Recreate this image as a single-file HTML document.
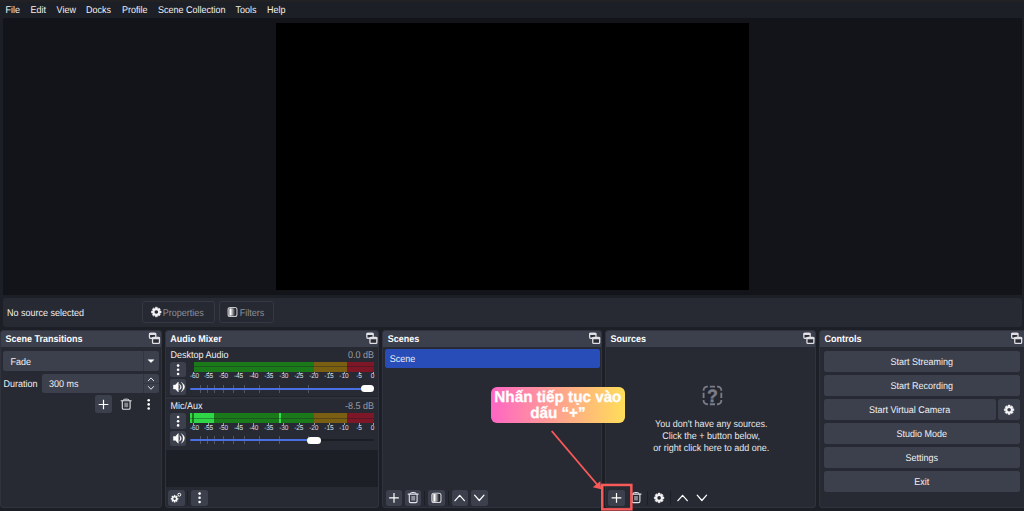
<!DOCTYPE html>
<html lang="vi"><head><meta charset="utf-8"><title>OBS</title>
<style>
*{box-sizing:border-box;margin:0;padding:0}
html,body{width:1024px;height:511px;overflow:hidden;background:#1d1f26;font-family:"Liberation Sans",sans-serif;font-size:9px;color:#fff;text-rendering:geometricPrecision}
.abs{position:absolute}
svg{overflow:visible}
#topline{left:0;top:0;width:1024px;height:1.5px;background:#222224}
#menubar{left:0;top:1.5px;width:1024px;height:16.5px;background:#1d1f26}
#menubar span{position:absolute;top:3.7px;line-height:10px;white-space:nowrap;color:#f0f0f3;transform:scaleY(1.09)}
#preview{left:2.7px;top:17.7px;width:1019px;height:277.3px;background:#13141a}
#canvas{left:276px;top:23.3px;width:473px;height:266.3px;background:#000}
#ctxbar{left:3px;top:297.5px;width:1018.7px;height:29.3px;background:#272a33;border-radius:3px}
.dock{position:absolute;top:329.7px;height:178.7px;background:#272a33;border-radius:3px;overflow:hidden;border:1px solid #30333e}
.dock .title{position:absolute;left:-1px;top:-1px;right:-1px;height:17.3px;background:#3c404d}
.dock .title b{position:absolute;left:5.5px;top:4.3px;line-height:10px;font-weight:bold;white-space:nowrap;color:#fdfdfe;transform:scaleY(1.09)}
.btn{position:absolute;background:#3c404d;border-radius:2.5px}
.lbl{position:absolute;white-space:nowrap;line-height:10px;color:#f0f0f3;transform:scaleY(1.09);margin-top:1.2px}
.lbl.c{transform:translateX(-50%) scaleY(1.09)}
.obtn{position:absolute;border:1.2px solid #363944;border-radius:3px;background:#262931}
.sep{position:absolute;width:1px;background:#1d1f26}
.tk{position:absolute;font-size:6.5px;line-height:7px;color:#dcdde2;transform:translateX(-50%) scaleY(1.1);white-space:nowrap;letter-spacing:-0.1px}
</style></head><body>
<div id="topline" class="abs"></div>
<div id="menubar" class="abs">
<span style="left:5.6px">File</span><span style="left:30.5px">Edit</span><span style="left:56.6px">View</span><span style="left:86px">Docks</span><span style="left:122px">Profile</span><span style="left:158px">Scene Collection</span><span style="left:235.5px">Tools</span><span style="left:267px">Help</span>
</div>
<div id="preview" class="abs"></div>
<div id="canvas" class="abs"></div>
<div id="ctxbar" class="abs"></div>

<span class="lbl" style="left:7px;top:307px;">No source selected</span>
<div class="obtn" style="left:142px;top:301px;width:73px;height:22px"></div>
<svg class="abs" style="left:150px;top:306px" width="13" height="13" viewBox="-6.300 -6.000 13 13" ><path d="M-1.07,-3.67 L-0.99,-4.80 L0.99,-4.80 L1.07,-3.67 L1.84,-3.35 L2.69,-4.10 L4.10,-2.69 L3.35,-1.84 L3.67,-1.07 L4.80,-0.99 L4.80,0.99 L3.67,1.07 L3.35,1.84 L4.10,2.69 L2.69,4.10 L1.84,3.35 L1.07,3.67 L0.99,4.80 L-0.99,4.80 L-1.07,3.67 L-1.84,3.35 L-2.69,4.10 L-4.10,2.69 L-3.35,1.84 L-3.67,1.07 L-4.80,0.99 L-4.80,-0.99 L-3.67,-1.07 L-3.35,-1.84 L-4.10,-2.69 L-2.69,-4.10 L-1.84,-3.35Z" fill="#f4f4f6" stroke="#f4f4f6" stroke-width="0.5" stroke-linejoin="round"/><circle cx="0" cy="0" r="1.81" fill="#262931"/></svg>
<span class="lbl" style="left:162.8px;top:306.6px;color:#8c8f99">Properties</span>
<div class="obtn" style="left:218.8px;top:301px;width:55.2px;height:22px"></div>
<svg class="abs" style="left:226px;top:305px" width="14" height="14" viewBox="-6.500 -7.000 14 14" ><linearGradient id="fg1" x1="0" y1="0" x2="1" y2="0"><stop offset="0" stop-color="#ffffff" stop-opacity="0.45"/><stop offset="0.3" stop-color="#ffffff" stop-opacity="1"/><stop offset="0.45" stop-color="#ffffff" stop-opacity="0.75"/><stop offset="1" stop-color="#ffffff" stop-opacity="0"/></linearGradient><rect x="-4.45" y="-4.45" width="8.9" height="8.9" rx="2" fill="#23252d" stroke="#c4c5cb" stroke-width="1.1"/><rect x="-3.9" y="-3.7" width="6.6" height="7.4" fill="url(#fg1)"/></svg>
<span class="lbl" style="left:239.7px;top:306.6px;color:#8c8f99">Filters</span>
<div class="dock" id="d1" style="left:0px;width:162px"><div class="title"><b>Scene Transitions</b></div></div>
<div class="dock" id="d2" style="left:164.8px;width:214.4px"><div class="title"><b>Audio Mixer</b></div></div>
<div class="dock" id="d3" style="left:382.3px;width:219.8px"><div class="title"><b>Scenes</b></div></div>
<div class="dock" id="d4" style="left:604.9px;width:211.3px"><div class="title"><b>Sources</b></div></div>
<div class="dock" id="d5" style="left:819px;width:210px"><div class="title"><b>Controls</b></div></div>
<svg class="abs" style="left:148px;top:332px" width="13" height="13" viewBox="-0.800 -0.700 13 13" ><rect x="0.65" y="0.65" width="6.3" height="4.9" rx="0.9" fill="#2a2c36" stroke="#e0e0e5" stroke-width="1.3"/><rect x="0.2" y="0.1" width="7.2" height="2.2" rx="0.8" fill="#e0e0e5"/><rect x="3.75" y="4.75" width="6.9" height="5.9" rx="0.9" fill="#2a2c36" stroke="#e0e0e5" stroke-width="1.3"/><rect x="3.2" y="4.2" width="8" height="2.4" rx="0.8" fill="#e0e0e5"/></svg>
<svg class="abs" style="left:366px;top:332px" width="13" height="13" viewBox="-0.200 -0.700 13 13" ><rect x="0.65" y="0.65" width="6.3" height="4.9" rx="0.9" fill="#2a2c36" stroke="#e0e0e5" stroke-width="1.3"/><rect x="0.2" y="0.1" width="7.2" height="2.2" rx="0.8" fill="#e0e0e5"/><rect x="3.75" y="4.75" width="6.9" height="5.9" rx="0.9" fill="#2a2c36" stroke="#e0e0e5" stroke-width="1.3"/><rect x="3.2" y="4.2" width="8" height="2.4" rx="0.8" fill="#e0e0e5"/></svg>
<svg class="abs" style="left:589px;top:332px" width="13" height="13" viewBox="0.000 -0.700 13 13" ><rect x="0.65" y="0.65" width="6.3" height="4.9" rx="0.9" fill="#2a2c36" stroke="#e0e0e5" stroke-width="1.3"/><rect x="0.2" y="0.1" width="7.2" height="2.2" rx="0.8" fill="#e0e0e5"/><rect x="3.75" y="4.75" width="6.9" height="5.9" rx="0.9" fill="#2a2c36" stroke="#e0e0e5" stroke-width="1.3"/><rect x="3.2" y="4.2" width="8" height="2.4" rx="0.8" fill="#e0e0e5"/></svg>
<svg class="abs" style="left:803px;top:332px" width="13" height="13" viewBox="-0.200 -0.700 13 13" ><rect x="0.65" y="0.65" width="6.3" height="4.9" rx="0.9" fill="#2a2c36" stroke="#e0e0e5" stroke-width="1.3"/><rect x="0.2" y="0.1" width="7.2" height="2.2" rx="0.8" fill="#e0e0e5"/><rect x="3.75" y="4.75" width="6.9" height="5.9" rx="0.9" fill="#2a2c36" stroke="#e0e0e5" stroke-width="1.3"/><rect x="3.2" y="4.2" width="8" height="2.4" rx="0.8" fill="#e0e0e5"/></svg>
<svg class="abs" style="left:1011px;top:332px" width="13" height="13" viewBox="0.000 -0.700 13 13" ><rect x="0.65" y="0.65" width="6.3" height="4.9" rx="0.9" fill="#2a2c36" stroke="#e0e0e5" stroke-width="1.3"/><rect x="0.2" y="0.1" width="7.2" height="2.2" rx="0.8" fill="#e0e0e5"/><rect x="3.75" y="4.75" width="6.9" height="5.9" rx="0.9" fill="#2a2c36" stroke="#e0e0e5" stroke-width="1.3"/><rect x="3.2" y="4.2" width="8" height="2.4" rx="0.8" fill="#e0e0e5"/></svg>
<div class="btn" style="left:3.2px;top:351px;width:155.5px;height:19.8px;"></div>
<div class="sep" style="left:142.6px;top:351px;height:19.8px;background:#323540"></div>
<span class="lbl" style="left:10.6px;top:356px;">Fade</span>
<svg class="abs" style="left:147px;top:359px" width="8" height="5" viewBox="-0.800 -0.400 8 5" ><path d="M0.3,0.3H6.1L3.2,3.2Z" fill="#fff" stroke="#fff" stroke-width="0.5" stroke-linejoin="round"/></svg>
<span class="lbl" style="left:3.5px;top:377.9px;">Duration</span>
<div class="btn" style="left:42.2px;top:374px;width:116.5px;height:19.3px;"></div>
<div class="sep" style="left:142.6px;top:374px;height:19.3px;background:#323540"></div>
<div class="abs" style="left:143px;top:383.3px;width:15.7px;height:1px;background:#323540"></div>
<span class="lbl" style="left:49.1px;top:377.9px;">300 ms</span>
<svg class="abs" style="left:144px;top:372px" width="15" height="15" viewBox="-7.000 -7.300 15 15" ><path d="M-2.6,1.4L0,-1.4L2.6,1.4" stroke="#e8e9ec" stroke-width="1.0" fill="none" stroke-linecap="round" stroke-linejoin="round"/></svg>
<svg class="abs" style="left:144px;top:380px" width="15" height="15" viewBox="-7.000 -7.900 15 15" ><path d="M-2.6,-1.4L0,1.4L2.6,-1.4" stroke="#e8e9ec" stroke-width="1.0" fill="none" stroke-linecap="round" stroke-linejoin="round"/></svg>
<div class="btn" style="left:94.7px;top:395.2px;width:17.3px;height:18.3px;"></div>
<svg class="abs" style="left:97px;top:398px" width="13" height="13" viewBox="-6.500 -6.500 13 13" ><path d="M-4.85,0H4.85M0,-4.85V4.85" stroke="#ffffff" stroke-width="1.2" stroke-linecap="butt" fill="none"/></svg>
<svg class="abs" style="left:119px;top:397px" width="14" height="14" viewBox="-7.200 -7.400 14 14" ><path d="M-5,-3.6H5" stroke="#e4e5e9" stroke-width="1.1" stroke-linecap="round" fill="none"/><path d="M-2.9,-3.8Q-2.9,-5.2 -1.5,-5.2H1.5Q2.9,-5.2 2.9,-3.8" stroke="#e4e5e9" stroke-width="1" fill="none"/><path d="M-3.9,-3.4V3.6Q-3.9,4.9 -2.6,4.9H2.6Q3.9,4.9 3.9,3.6V-3.4" stroke="#e4e5e9" stroke-width="1.1" fill="none"/><rect x="-1.9" y="-1.7" width="3.8" height="4.5" fill="#e4e5e9" opacity="0.5"/></svg>
<svg class="abs" style="left:141px;top:397px" width="15" height="15" viewBox="-7.700 -7.400 15 15" ><circle cx="0" cy="-4.1" r="1.3" fill="#ffffff"/><circle cx="0" cy="0" r="1.3" fill="#ffffff"/><circle cx="0" cy="4.1" r="1.3" fill="#ffffff"/></svg>
<div class="abs" style="left:166.2px;top:449.7px;width:211.6px;height:37px;background:#1d1f26"></div>
<span class="lbl" style="left:170.4px;top:348.7px;">Desktop Audio</span><span class="lbl" style="right:650px;top:348.7px;color:#9a9da6">0.0 dB</span><div class="btn" style="left:170.2px;top:361.7px;width:15.8px;height:15.6px;"></div><svg class="abs" style="left:171px;top:362px" width="15" height="15" viewBox="-7.100 -7.800 15 15" ><circle cx="0" cy="-4.2" r="1.3" fill="#ffffff"/><circle cx="0" cy="0" r="1.3" fill="#ffffff"/><circle cx="0" cy="4.2" r="1.3" fill="#ffffff"/></svg><div class="abs" style="left:193.7px;top:361.7px;width:120.3px;height:10.2px;background:#1a7a1a"></div><div class="abs" style="left:314.0px;top:361.7px;width:33.1px;height:10.2px;background:#7a5f12"></div><div class="abs" style="left:347.1px;top:361.7px;width:27.1px;height:10.2px;background:#7d1626"></div><div class="abs" style="left:193.7px;top:366.09999999999997px;width:180.5px;height:1px;background:rgba(25,28,36,0.38)"></div><div class="abs" style="left:193.2px;top:371.9px;width:0.9px;height:2px;background:#9a9da6"></div><span class="tk" style="left:194.6px;top:373.09999999999997px">-60</span><div class="abs" style="left:208.2px;top:371.9px;width:0.9px;height:2px;background:#9a9da6"></div><span class="tk" style="left:208.5px;top:373.09999999999997px">-55</span><div class="abs" style="left:223.3px;top:371.9px;width:0.9px;height:2px;background:#9a9da6"></div><span class="tk" style="left:223.6px;top:373.09999999999997px">-50</span><div class="abs" style="left:238.3px;top:371.9px;width:0.9px;height:2px;background:#9a9da6"></div><span class="tk" style="left:238.6px;top:373.09999999999997px">-45</span><div class="abs" style="left:253.4px;top:371.9px;width:0.9px;height:2px;background:#9a9da6"></div><span class="tk" style="left:253.7px;top:373.09999999999997px">-40</span><div class="abs" style="left:268.4px;top:371.9px;width:0.9px;height:2px;background:#9a9da6"></div><span class="tk" style="left:268.7px;top:373.09999999999997px">-35</span><div class="abs" style="left:283.4px;top:371.9px;width:0.9px;height:2px;background:#9a9da6"></div><span class="tk" style="left:283.8px;top:373.09999999999997px">-30</span><div class="abs" style="left:298.5px;top:371.9px;width:0.9px;height:2px;background:#9a9da6"></div><span class="tk" style="left:298.8px;top:373.09999999999997px">-25</span><div class="abs" style="left:313.5px;top:371.9px;width:0.9px;height:2px;background:#9a9da6"></div><span class="tk" style="left:313.8px;top:373.09999999999997px">-20</span><div class="abs" style="left:328.6px;top:371.9px;width:0.9px;height:2px;background:#9a9da6"></div><span class="tk" style="left:328.9px;top:373.09999999999997px">-15</span><div class="abs" style="left:343.6px;top:371.9px;width:0.9px;height:2px;background:#9a9da6"></div><span class="tk" style="left:343.9px;top:373.09999999999997px">-10</span><div class="abs" style="left:358.7px;top:371.9px;width:0.9px;height:2px;background:#9a9da6"></div><span class="tk" style="left:359.0px;top:373.09999999999997px">-5</span><div class="abs" style="left:372.9px;top:371.9px;width:0.9px;height:2px;background:#9a9da6"></div><span class="tk" style="left:372.5px;top:373.09999999999997px">0</span><div class="btn" style="left:170.2px;top:379.2px;width:15.8px;height:15.6px;"></div><svg class="abs" style="left:171px;top:380px" width="15" height="15" viewBox="-7.750 -7.000 15 15" ><path d="M-5.3,-1.9H-3.3L-0.5,-4.9V4.9L-3.3,1.9H-5.3Z" fill="#ffffff" stroke="#ffffff" stroke-width="0.5" stroke-linejoin="round"/><path d="M0.9,-2.8Q4.3,0 0.9,2.8Q2.5,0 0.9,-2.8Z" fill="#ffffff" stroke="#ffffff" stroke-width="0.35" stroke-linejoin="round"/><path d="M2.7,-4.8Q9.1,0 2.7,4.8Q6.1,0 2.7,-4.8Z" fill="#ffffff" stroke="#ffffff" stroke-width="0.35" stroke-linejoin="round"/></svg><div class="abs" style="left:190.3px;top:387.5px;width:183.6px;height:2.6px;border-radius:1.3px;background:#1b1d24"></div><div class="abs" style="left:200.1px;top:384.90000000000003px;width:0.9px;height:8.1px;background:#525663"></div><div class="abs" style="left:207.0px;top:384.90000000000003px;width:0.9px;height:8.1px;background:#525663"></div><div class="abs" style="left:214.1px;top:384.90000000000003px;width:0.9px;height:8.1px;background:#525663"></div><div class="abs" style="left:223.0px;top:384.90000000000003px;width:0.9px;height:8.1px;background:#525663"></div><div class="abs" style="left:232.6px;top:384.90000000000003px;width:0.9px;height:8.1px;background:#525663"></div><div class="abs" style="left:244.0px;top:384.90000000000003px;width:0.9px;height:8.1px;background:#525663"></div><div class="abs" style="left:259.3px;top:384.90000000000003px;width:0.9px;height:8.1px;background:#525663"></div><div class="abs" style="left:279.1px;top:384.90000000000003px;width:0.9px;height:8.1px;background:#525663"></div><div class="abs" style="left:308.1px;top:384.90000000000003px;width:0.9px;height:8.1px;background:#525663"></div><div class="abs" style="left:190.3px;top:387.5px;width:174.39999999999998px;height:2.6px;border-radius:1.3px;background:#4a70e4"></div><div class="abs" style="left:360.7px;top:385.3px;width:13.6px;height:7.1px;border-radius:3.6px;background:#fff"></div>
<div class="abs" style="left:166px;top:395.6px;width:212px;height:1.5px;background:#22242c"></div><div class="abs" style="left:166px;top:397.1px;width:212px;height:1.8px;background:#2e313b"></div>
<span class="lbl" style="left:170.4px;top:400.1px;">Mic/Aux</span><span class="lbl" style="right:650px;top:400.1px;color:#9a9da6">-8.5 dB</span><div class="btn" style="left:170.2px;top:413.1px;width:15.8px;height:15.6px;"></div><svg class="abs" style="left:171px;top:414px" width="15" height="15" viewBox="-7.100 -7.200 15 15" ><circle cx="0" cy="-4.2" r="1.3" fill="#ffffff"/><circle cx="0" cy="0" r="1.3" fill="#ffffff"/><circle cx="0" cy="4.2" r="1.3" fill="#ffffff"/></svg><div class="abs" style="left:193.7px;top:413.1px;width:120.3px;height:10.2px;background:#1a7a1a"></div><div class="abs" style="left:314.0px;top:413.1px;width:33.1px;height:10.2px;background:#7a5f12"></div><div class="abs" style="left:347.1px;top:413.1px;width:27.1px;height:10.2px;background:#7d1626"></div><div class="abs" style="left:193.7px;top:413.1px;width:20.3px;height:10.2px;background:#2fd645"></div><div class="abs" style="left:278.8px;top:413.1px;width:2.1px;height:10.2px;background:#34e04a"></div><div class="abs" style="left:190px;top:413.1px;width:1.9px;height:10.2px;background:#2fd645"></div><div class="abs" style="left:191.9px;top:413.1px;width:1.9px;height:10.2px;background:#1a7a1a"></div><div class="abs" style="left:190px;top:417.5px;width:184.2px;height:1px;background:rgba(25,28,36,0.38)"></div><div class="abs" style="left:193.2px;top:423.3px;width:0.9px;height:2px;background:#9a9da6"></div><span class="tk" style="left:194.6px;top:424.5px">-60</span><div class="abs" style="left:208.2px;top:423.3px;width:0.9px;height:2px;background:#9a9da6"></div><span class="tk" style="left:208.5px;top:424.5px">-55</span><div class="abs" style="left:223.3px;top:423.3px;width:0.9px;height:2px;background:#9a9da6"></div><span class="tk" style="left:223.6px;top:424.5px">-50</span><div class="abs" style="left:238.3px;top:423.3px;width:0.9px;height:2px;background:#9a9da6"></div><span class="tk" style="left:238.6px;top:424.5px">-45</span><div class="abs" style="left:253.4px;top:423.3px;width:0.9px;height:2px;background:#9a9da6"></div><span class="tk" style="left:253.7px;top:424.5px">-40</span><div class="abs" style="left:268.4px;top:423.3px;width:0.9px;height:2px;background:#9a9da6"></div><span class="tk" style="left:268.7px;top:424.5px">-35</span><div class="abs" style="left:283.4px;top:423.3px;width:0.9px;height:2px;background:#9a9da6"></div><span class="tk" style="left:283.8px;top:424.5px">-30</span><div class="abs" style="left:298.5px;top:423.3px;width:0.9px;height:2px;background:#9a9da6"></div><span class="tk" style="left:298.8px;top:424.5px">-25</span><div class="abs" style="left:313.5px;top:423.3px;width:0.9px;height:2px;background:#9a9da6"></div><span class="tk" style="left:313.8px;top:424.5px">-20</span><div class="abs" style="left:328.6px;top:423.3px;width:0.9px;height:2px;background:#9a9da6"></div><span class="tk" style="left:328.9px;top:424.5px">-15</span><div class="abs" style="left:343.6px;top:423.3px;width:0.9px;height:2px;background:#9a9da6"></div><span class="tk" style="left:343.9px;top:424.5px">-10</span><div class="abs" style="left:358.7px;top:423.3px;width:0.9px;height:2px;background:#9a9da6"></div><span class="tk" style="left:359.0px;top:424.5px">-5</span><div class="abs" style="left:372.9px;top:423.3px;width:0.9px;height:2px;background:#9a9da6"></div><span class="tk" style="left:372.5px;top:424.5px">0</span><div class="btn" style="left:170.2px;top:430.6px;width:15.8px;height:15.6px;"></div><svg class="abs" style="left:171px;top:431px" width="15" height="15" viewBox="-7.750 -7.400 15 15" ><path d="M-5.3,-1.9H-3.3L-0.5,-4.9V4.9L-3.3,1.9H-5.3Z" fill="#ffffff" stroke="#ffffff" stroke-width="0.5" stroke-linejoin="round"/><path d="M0.9,-2.8Q4.3,0 0.9,2.8Q2.5,0 0.9,-2.8Z" fill="#ffffff" stroke="#ffffff" stroke-width="0.35" stroke-linejoin="round"/><path d="M2.7,-4.8Q9.1,0 2.7,4.8Q6.1,0 2.7,-4.8Z" fill="#ffffff" stroke="#ffffff" stroke-width="0.35" stroke-linejoin="round"/></svg><div class="abs" style="left:190.3px;top:438.90000000000003px;width:183.6px;height:2.6px;border-radius:1.3px;background:#1b1d24"></div><div class="abs" style="left:200.1px;top:436.30000000000007px;width:0.9px;height:8.1px;background:#525663"></div><div class="abs" style="left:207.0px;top:436.30000000000007px;width:0.9px;height:8.1px;background:#525663"></div><div class="abs" style="left:214.1px;top:436.30000000000007px;width:0.9px;height:8.1px;background:#525663"></div><div class="abs" style="left:223.0px;top:436.30000000000007px;width:0.9px;height:8.1px;background:#525663"></div><div class="abs" style="left:232.6px;top:436.30000000000007px;width:0.9px;height:8.1px;background:#525663"></div><div class="abs" style="left:244.0px;top:436.30000000000007px;width:0.9px;height:8.1px;background:#525663"></div><div class="abs" style="left:259.3px;top:436.30000000000007px;width:0.9px;height:8.1px;background:#525663"></div><div class="abs" style="left:279.1px;top:436.30000000000007px;width:0.9px;height:8.1px;background:#525663"></div><div class="abs" style="left:308.1px;top:436.30000000000007px;width:0.9px;height:8.1px;background:#525663"></div><div class="abs" style="left:190.3px;top:438.90000000000003px;width:120.89999999999998px;height:2.6px;border-radius:1.3px;background:#4a70e4"></div><div class="abs" style="left:307.2px;top:436.70000000000005px;width:13.6px;height:7.1px;border-radius:3.6px;background:#fff"></div>
<div class="btn" style="left:168px;top:489.8px;width:16.8px;height:16px;"></div>
<svg class="abs" style="left:168px;top:490px" width="15" height="15" viewBox="-7.900 -7.600 15 15" ><path d="M-1.93,-1.32 L-1.89,-2.35 L-0.71,-2.35 L-0.67,-1.32 L0.04,-1.03 L0.79,-1.73 L1.63,-0.89 L0.93,-0.14 L1.22,0.57 L2.25,0.61 L2.25,1.79 L1.22,1.83 L0.93,2.54 L1.63,3.29 L0.79,4.13 L0.04,3.43 L-0.67,3.72 L-0.71,4.75 L-1.89,4.75 L-1.93,3.72 L-2.64,3.43 L-3.39,4.13 L-4.23,3.29 L-3.53,2.54 L-3.82,1.83 L-4.85,1.79 L-4.85,0.61 L-3.82,0.57 L-3.53,-0.14 L-4.23,-0.89 L-3.39,-1.73 L-2.64,-1.03Z" fill="#ffffff" stroke="#ffffff" stroke-width="0.4" stroke-linejoin="round"/><circle cx="-1.3" cy="1.2" r="1.25" fill="#3c404d"/><circle cx="3.4" cy="-2.9" r="1.45" fill="none" stroke="#ffffff" stroke-width="1"/></svg>
<div class="sep" style="left:187px;top:490.5px;height:14.5px"></div>
<div class="btn" style="left:191.3px;top:489.8px;width:16.6px;height:16px;"></div>
<svg class="abs" style="left:192px;top:490px" width="15" height="15" viewBox="-7.600 -7.800 15 15" ><circle cx="0" cy="-4.2" r="1.3" fill="#ffffff"/><circle cx="0" cy="0" r="1.3" fill="#ffffff"/><circle cx="0" cy="4.2" r="1.3" fill="#ffffff"/></svg>
<div class="abs" style="left:384.7px;top:348.7px;width:215.3px;height:19.1px;border-radius:2.5px;background:#284cb8"></div>
<span class="lbl" style="left:389.7px;top:353px;">Scene</span>
<div class="btn" style="left:385.6px;top:490px;width:16.4px;height:16px;"></div>
<svg class="abs" style="left:388px;top:491px" width="13" height="13" viewBox="-6.000 -6.900 13 13" ><path d="M-4.85,0H4.85M0,-4.85V4.85" stroke="#ffffff" stroke-width="1.2" stroke-linecap="butt" fill="none"/></svg>
<div class="btn" style="left:404.8px;top:490px;width:16.5px;height:16px;"></div>
<svg class="abs" style="left:406px;top:491px" width="14" height="14" viewBox="-7.200 -6.700 14 14" ><path d="M-5,-3.6H5" stroke="#e4e5e9" stroke-width="1.1" stroke-linecap="round" fill="none"/><path d="M-2.9,-3.8Q-2.9,-5.2 -1.5,-5.2H1.5Q2.9,-5.2 2.9,-3.8" stroke="#e4e5e9" stroke-width="1" fill="none"/><path d="M-3.9,-3.4V3.6Q-3.9,4.9 -2.6,4.9H2.6Q3.9,4.9 3.9,3.6V-3.4" stroke="#e4e5e9" stroke-width="1.1" fill="none"/><rect x="-1.9" y="-1.7" width="3.8" height="4.5" fill="#e4e5e9" opacity="0.5"/></svg>
<div class="sep" style="left:424.2px;top:490.5px;height:14.5px"></div>
<div class="btn" style="left:428px;top:490px;width:16.7px;height:16px;"></div>
<svg class="abs" style="left:429px;top:491px" width="14" height="14" viewBox="-7.400 -6.900 14 14" ><linearGradient id="fg2" x1="0" y1="0" x2="1" y2="0"><stop offset="0" stop-color="#ffffff" stop-opacity="0.45"/><stop offset="0.3" stop-color="#ffffff" stop-opacity="1"/><stop offset="0.45" stop-color="#ffffff" stop-opacity="0.75"/><stop offset="1" stop-color="#ffffff" stop-opacity="0"/></linearGradient><rect x="-4.55" y="-4.65" width="9.1" height="9.3" rx="2" fill="#23252d" stroke="#d4d5da" stroke-width="1.1"/><rect x="-3.9999999999999996" y="-3.9000000000000004" width="6.699999999999999" height="7.800000000000001" fill="url(#fg2)"/></svg>
<div class="sep" style="left:447.7px;top:490.5px;height:14.5px"></div>
<div class="btn" style="left:451.5px;top:490px;width:16.6px;height:16px;"></div>
<svg class="abs" style="left:452px;top:491px" width="15" height="15" viewBox="-7.700 -7.000 15 15" ><path d="M-4.7,2.7L0,-2.7L4.7,2.7" stroke="#ffffff" stroke-width="1.25" fill="none" stroke-linecap="round" stroke-linejoin="round"/></svg>
<div class="btn" style="left:470.8px;top:490px;width:16.8px;height:16px;"></div>
<svg class="abs" style="left:472px;top:490px" width="15" height="15" viewBox="-7.300 -7.800 15 15" ><path d="M-4.7,-2.7L0,2.7L4.7,-2.7" stroke="#ffffff" stroke-width="1.25" fill="none" stroke-linecap="round" stroke-linejoin="round"/></svg>
<svg class="abs" style="left:701px;top:384px" width="22" height="22" viewBox="-11.450 -11.400 22 22" ><rect x="-7" y="-7" width="14" height="14" fill="#23252e" opacity="0.6"/><path d="M-8.85,-4.6V-5.35A3.5,3.5 0 0 1 -5.35,-8.85H-4.6 M8.85,-4.6V-5.35A3.5,3.5 0 0 0 5.35,-8.85H4.6 M8.85,4.6V5.35A3.5,3.5 0 0 1 5.35,8.85H4.6 M-8.85,4.6V5.35A3.5,3.5 0 0 0 -5.35,8.85H-4.6 M-2.55,-8.85H2.55M-2.55,8.85H2.55M-8.85,-2.55V2.55M8.85,-2.55V2.55" fill="none" stroke="#7a7d88" stroke-width="1.8"/><text x="0" y="6.45" text-anchor="middle" font-family="Liberation Sans, sans-serif" font-weight="bold" font-size="17.8" fill="#7a7d88" stroke="#7a7d88" stroke-width="0.45">?</text></svg>
<span class="lbl c" style="left:711.2px;top:417.8px;color:#e6e7ea">You don't have any sources.</span>
<span class="lbl c" style="left:711.2px;top:429.8px;color:#e6e7ea">Click the + button below,</span>
<span class="lbl c" style="left:711.2px;top:441.6px;color:#e6e7ea">or right click here to add one.</span>
<div class="btn" style="left:608.3px;top:489.8px;width:16.7px;height:16.1px;"></div>
<svg class="abs" style="left:610px;top:491px" width="13" height="13" viewBox="-6.500 -6.900 13 13" ><path d="M-4.85,0H4.85M0,-4.85V4.85" stroke="#ffffff" stroke-width="1.2" stroke-linecap="butt" fill="none"/></svg>
<svg class="abs" style="left:629px;top:491px" width="14" height="14" viewBox="-7.000 -6.700 14 14" ><path d="M-5,-3.6H5" stroke="#e4e5e9" stroke-width="1.1" stroke-linecap="round" fill="none"/><path d="M-2.9,-3.8Q-2.9,-5.2 -1.5,-5.2H1.5Q2.9,-5.2 2.9,-3.8" stroke="#e4e5e9" stroke-width="1" fill="none"/><path d="M-3.9,-3.4V3.6Q-3.9,4.9 -2.6,4.9H2.6Q3.9,4.9 3.9,3.6V-3.4" stroke="#e4e5e9" stroke-width="1.1" fill="none"/><rect x="-1.9" y="-1.7" width="3.8" height="4.5" fill="#e4e5e9" opacity="0.5"/></svg>
<div class="sep" style="left:646.8px;top:490.5px;height:14.5px"></div>
<svg class="abs" style="left:653px;top:492px" width="13" height="13" viewBox="-6.100 -5.900 13 13" ><path d="M-1.07,-3.67 L-0.99,-4.80 L0.99,-4.80 L1.07,-3.67 L1.84,-3.35 L2.69,-4.10 L4.10,-2.69 L3.35,-1.84 L3.67,-1.07 L4.80,-0.99 L4.80,0.99 L3.67,1.07 L3.35,1.84 L4.10,2.69 L2.69,4.10 L1.84,3.35 L1.07,3.67 L0.99,4.80 L-0.99,4.80 L-1.07,3.67 L-1.84,3.35 L-2.69,4.10 L-4.10,2.69 L-3.35,1.84 L-3.67,1.07 L-4.80,0.99 L-4.80,-0.99 L-3.67,-1.07 L-3.35,-1.84 L-4.10,-2.69 L-2.69,-4.10 L-1.84,-3.35Z" fill="#f4f4f6" stroke="#f4f4f6" stroke-width="0.5" stroke-linejoin="round"/><circle cx="0" cy="0" r="1.81" fill="#272a33"/></svg>
<div class="sep" style="left:670px;top:490.5px;height:14.5px"></div>
<svg class="abs" style="left:675px;top:491px" width="15" height="15" viewBox="-7.600 -7.000 15 15" ><path d="M-4.7,2.7L0,-2.7L4.7,2.7" stroke="#ffffff" stroke-width="1.25" fill="none" stroke-linecap="round" stroke-linejoin="round"/></svg>
<svg class="abs" style="left:694px;top:490px" width="15" height="15" viewBox="-7.900 -7.800 15 15" ><path d="M-4.7,-2.7L0,2.7L4.7,-2.7" stroke="#ffffff" stroke-width="1.25" fill="none" stroke-linecap="round" stroke-linejoin="round"/></svg>
<div class="btn" style="left:823.7px;top:351px;width:196.1px;height:20.8px;"></div>
<span class="lbl c" style="left:921.7px;top:355.8px;">Start Streaming</span>
<div class="btn" style="left:823.7px;top:375px;width:196.1px;height:20.8px;"></div>
<span class="lbl c" style="left:921.7px;top:379.8px;">Start Recording</span>
<div class="btn" style="left:823.7px;top:399px;width:172.1px;height:20.8px;"></div>
<span class="lbl c" style="left:909.7px;top:403.8px;">Start Virtual Camera</span>
<div class="btn" style="left:998.3px;top:399px;width:21.6px;height:20.8px;"></div>
<svg class="abs" style="left:1003px;top:403px" width="13" height="13" viewBox="-6.100 -6.800 13 13" ><path d="M-1.06,-3.63 L-0.98,-4.75 L0.98,-4.75 L1.06,-3.63 L1.82,-3.32 L2.66,-4.05 L4.05,-2.66 L3.32,-1.82 L3.63,-1.06 L4.75,-0.98 L4.75,0.98 L3.63,1.06 L3.32,1.82 L4.05,2.66 L2.66,4.05 L1.82,3.32 L1.06,3.63 L0.98,4.75 L-0.98,4.75 L-1.06,3.63 L-1.82,3.32 L-2.66,4.05 L-4.05,2.66 L-3.32,1.82 L-3.63,1.06 L-4.75,0.98 L-4.75,-0.98 L-3.63,-1.06 L-3.32,-1.82 L-4.05,-2.66 L-2.66,-4.05 L-1.82,-3.32Z" fill="#f4f4f6" stroke="#f4f4f6" stroke-width="0.5" stroke-linejoin="round"/><circle cx="0" cy="0" r="1.79" fill="#3c404d"/></svg>
<div class="btn" style="left:823.7px;top:423px;width:196.1px;height:20.8px;"></div>
<span class="lbl c" style="left:921.7px;top:427.8px;">Studio Mode</span>
<div class="btn" style="left:823.7px;top:447px;width:196.1px;height:20.8px;"></div>
<span class="lbl c" style="left:921.7px;top:451.8px;">Settings</span>
<div class="btn" style="left:823.7px;top:471px;width:196.1px;height:20.8px;"></div>
<span class="lbl c" style="left:921.7px;top:475.8px;">Exit</span>
<div class="abs" style="left:490.8px;top:386.9px;width:133.8px;height:36.2px;border-radius:6px;background:linear-gradient(90deg,#ff66c4 0%,#ffde59 100%)"></div>
<div class="abs" id="bub" style="left:490.8px;top:389.6px;width:133.8px;text-align:center;font-family:'Liberation Sans',sans-serif;font-weight:bold;font-size:15.7px;line-height:16.4px;color:#fff;white-space:nowrap;transform:scaleX(0.972);-webkit-text-stroke:0.3px #fff">Nhấn tiếp tục vào<br>dấu “+”</div>
<svg class="abs" style="left:0;top:0" width="1024" height="511" viewBox="0 0 1024 511"><path d="M551.7,431L598,485.5" stroke="#f85959" stroke-width="1.9" fill="none"/><path d="M601.2,489.3L592.8,487.2L600.2,481.2Z" fill="#f85959"/><rect x="602.25" y="484.95" width="29.1" height="24.4" fill="none" stroke="#f85959" stroke-width="2.5"/></svg>
</body></html>
